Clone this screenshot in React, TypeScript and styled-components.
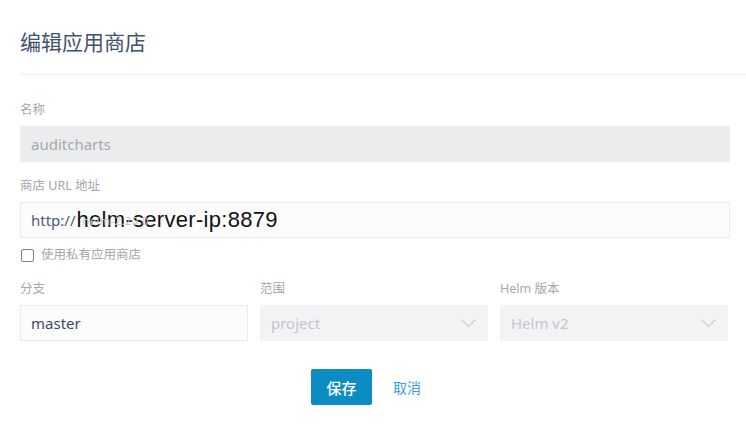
import React from 'react';
import styled, { createGlobalStyle } from 'styled-components';

const GlobalStyle = createGlobalStyle`
  html, body {
    margin: 0;
    padding: 0;
    background: #ffffff;
  }
  body {
    font-family: "Noto Sans", "Noto Sans CJK SC", sans-serif;
  }
`;

const cjk = `"Noto Sans", "Noto Sans CJK SC", sans-serif`;

const Page = styled.div`
  width: 746px;
  height: 425px;
  box-sizing: border-box;
  padding: 0 16px 0 20px;
  overflow: hidden;
`;

const Header = styled.div`
  padding-top: 28px;
  height: 75px;
  box-sizing: border-box;
  border-bottom: 1px solid #eff0f2;
  margin-right: -16px;
`;

const Title = styled.h1`
  margin: 0;
  font-family: ${cjk};
  font-size: 21px;
  line-height: 28px;
  font-weight: 400;
  color: #3f526e;
`;

const Form = styled.div`
  padding-top: 27px;
  display: flex;
  flex-direction: column;
`;

const Field = styled.div`
  display: flex;
  flex-direction: column;
  margin-bottom: 16px;
`;

const Label = styled.label`
  font-family: ${cjk};
  font-size: 12.5px;
  line-height: 16px;
  color: #a2a7ae;
  margin-bottom: 8px;
`;

const TextBox = styled.div<{ $disabled?: boolean }>`
  height: 36px;
  box-sizing: border-box;
  display: flex;
  align-items: center;
  padding: 0 10px;
  font-family: "Noto Sans", sans-serif;
  font-size: 15px;
  background: ${(p) => (p.$disabled ? '#ebecee' : '#fcfcfc')};
  border: 1px solid ${(p) => (p.$disabled ? '#ebecee' : '#e6ebee')};
  color: ${(p) => (p.$disabled ? '#a4a9b0' : '#3c4a5d')};
  position: relative;
`;

const Scheme = styled.span`
  color: #4a5c76;
  font-family: "Noto Sans", sans-serif;
  font-size: 15px;
`;

const Host = styled.span`
  position: relative;
  margin-left: 1px;
  color: #111111;
  font-family: "Liberation Sans", Arial, sans-serif;
  font-size: 22px;
  line-height: 24px;
  letter-spacing: 0.3px;
`;

const Ghost = styled.span`
  position: absolute;
  left: 6px;
  top: 7px;
  font-family: "Noto Sans", sans-serif;
  font-size: 11px;
  line-height: 12px;
  color: #c3c9d2;
  letter-spacing: 0.5px;
`;

const CheckRow = styled.label`
  display: flex;
  align-items: center;
  gap: 7px;
  margin-top: -7px;
  margin-bottom: 18px;
  font-family: ${cjk};
  font-size: 12.5px;
  line-height: 16px;
  color: #a2a7ae;
`;

const Box = styled.span`
  width: 11px;
  height: 11px;
  border: 1px solid #7d8189;
  border-radius: 2px;
  margin-left: 1px;
  background: #fff;
`;

const Grid = styled.div`
  display: grid;
  grid-template-columns: 228px 228px 228px;
  column-gap: 12px;
`;

const Select = styled(TextBox)`
  justify-content: space-between;
  background: #f2f3f5;
  border-color: #f2f3f5;
  color: #c3c6cc;
  padding-right: 11px;
`;

const Actions = styled.div`
  display: flex;
  justify-content: center;
  align-items: center;
  gap: 21px;
  margin-top: 12px;
  padding-right: 18px;
`;

const Primary = styled.button`
  height: 36px;
  width: 61px;
  border: none;
  border-radius: 2px;
  background: #0b8dc4;
  color: #ffffff;
  font-family: ${cjk};
  font-size: 15px;
  font-weight: 500;
  padding: 0;
`;

const LinkButton = styled.button`
  border: none;
  background: none;
  padding: 0;
  color: #3a9ee2;
  font-family: ${cjk};
  font-size: 14px;
`;

const Chevron = () => (
  <svg width="15" height="8" viewBox="0 0 15 8" fill="none">
    <path d="M0.5 0.5l7 7 7-7" stroke="#c9cdd3" strokeWidth="1.1" />
  </svg>
);

export default function App() {
  return (
    <Page>
      <GlobalStyle />
      <Header>
        <Title>编辑应用商店</Title>
      </Header>
      <Form>
        <Field>
          <Label>名称</Label>
          <TextBox $disabled>auditcharts</TextBox>
        </Field>
        <Field>
          <Label>商店 URL 地址</Label>
          <TextBox>
            <Scheme>http://</Scheme>
            <Host>
              <Ghost>helm-2.20.0</Ghost>
              helm-server-ip:8879
            </Host>
          </TextBox>
        </Field>
        <CheckRow>
          <Box />
          使用私有应用商店
        </CheckRow>
        <Grid>
          <Field>
            <Label>分支</Label>
            <TextBox>master</TextBox>
          </Field>
          <Field>
            <Label>范围</Label>
            <Select>
              project
              <Chevron />
            </Select>
          </Field>
          <Field>
            <Label>Helm 版本</Label>
            <Select>
              Helm v2
              <Chevron />
            </Select>
          </Field>
        </Grid>
        <Actions>
          <Primary>保存</Primary>
          <LinkButton>取消</LinkButton>
        </Actions>
      </Form>
    </Page>
  );
}
